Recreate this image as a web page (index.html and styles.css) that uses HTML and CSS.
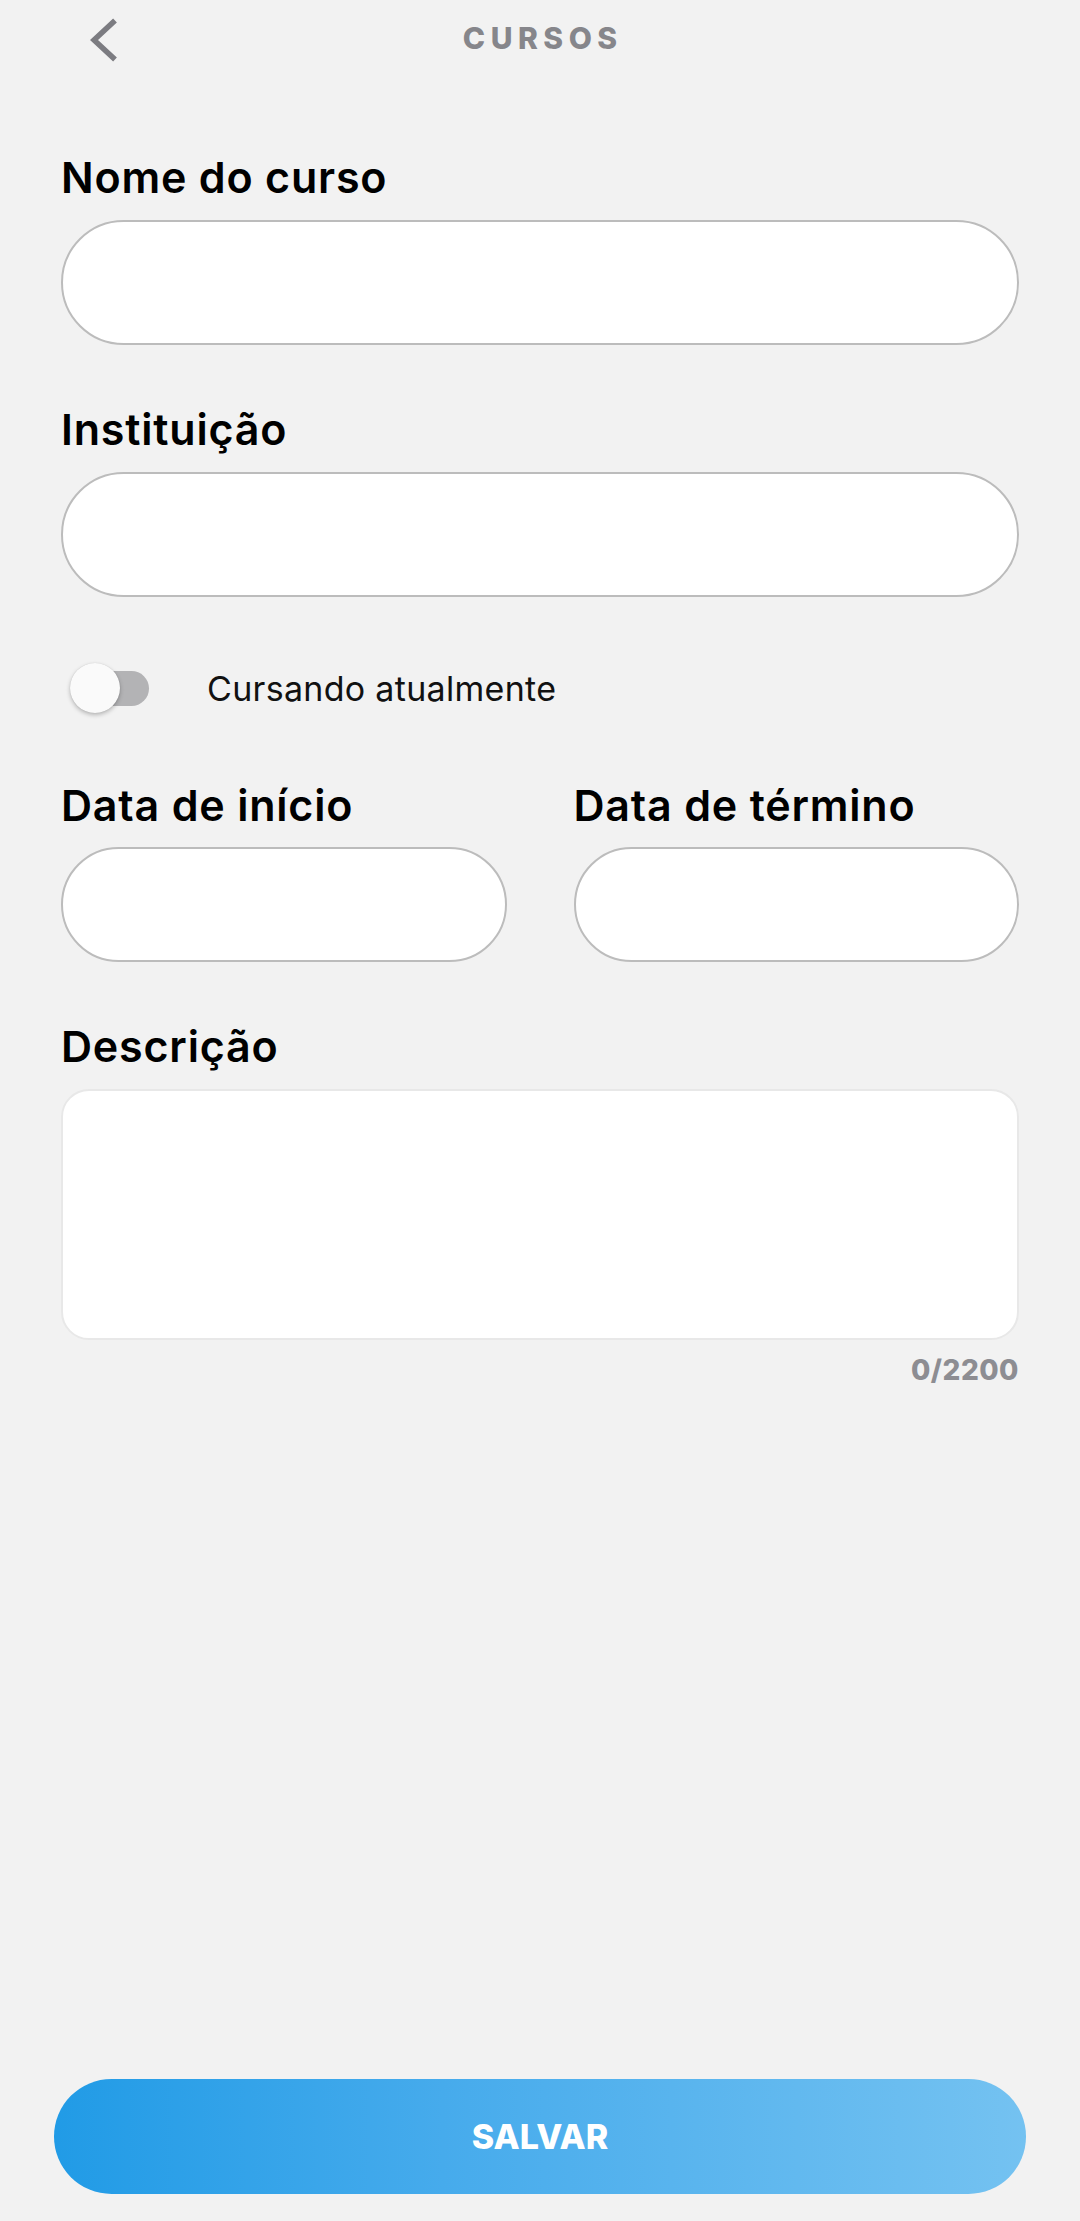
FILE: index.html
```html
<!DOCTYPE html>
<html lang="pt-BR">
<head>
<meta charset="utf-8">
<title>Cursos</title>
<link rel="stylesheet" href="styles.css">
</head>
<body>
<div class="page">
  <header class="topbar">
    <div class="back">
      <svg class="back-icon" width="30" height="44" viewBox="0 0 30 44" aria-hidden="true">
        <polyline points="25,2.5 4,22 25,41.5" fill="none" stroke="#7c7c81" stroke-width="5.5" stroke-linejoin="miter"/>
      </svg>
    </div>
    <h1 class="title">CURSOS</h1>
    <div class="spacer-col"></div>
  </header>

  <main class="form">
    <div class="field field-first">
      <label class="label">Nome do curso</label>
      <div class="input input-lg"></div>
    </div>

    <div class="field field-gap">
      <label class="label">Instituição</label>
      <div class="input input-lg"></div>
    </div>

    <div class="toggle-row">
      <div class="switch">
        <span class="switch-track"></span>
        <span class="switch-knob"></span>
      </div>
      <span class="toggle-text">Cursando atualmente</span>
    </div>

    <div class="date-row">
      <div class="field">
        <label class="label">Data de início</label>
        <div class="input input-md"></div>
      </div>
      <div class="field">
        <label class="label">Data de término</label>
        <div class="input input-md"></div>
      </div>
    </div>

    <div class="field field-gap">
      <label class="label">Descrição</label>
      <div class="textarea"></div>
      <div class="counter">0/2200</div>
    </div>
  </main>

  <div class="fill"></div>

  <footer class="footer">
    <button class="save" type="button">SALVAR</button>
  </footer>
</div>
</body>
</html>
```

FILE: styles.css
```css
* {
  box-sizing: border-box;
}

html, body {
  margin: 0;
  padding: 0;
  background: #f2f2f2;
}

body {
  font-family: Inter, Roboto, "Noto Sans", "Liberation Sans", sans-serif;
  color: #000;
}

.page {
  display: flex;
  flex-direction: column;
  min-height: 2221px;
}

.topbar {
  height: 76px;
  display: grid;
  grid-template-columns: 1fr auto 1fr;
  align-items: center;
}

.back {
  padding-left: 90px;
  display: flex;
  align-items: center;
}

.back-icon {
  display: block;
  margin-top: 3px;
}

.title {
  margin: 0;
  font-size: 30px;
  font-weight: 800;
  letter-spacing: 5.5px;
  margin-right: -5.5px;
  color: #86868b;
  line-height: 40px;
}

.form {
  padding: 0 61px;
}

.field {
  display: flex;
  flex-direction: column;
}

.field-first {
  margin-top: 75px;
}

.field-gap {
  margin-top: 58px;
}

.label {
  font-size: 43px;
  font-weight: 600;
  line-height: 52px;
  letter-spacing: 0.8px;
  margin-bottom: 17px;
  color: #000;
}

.input {
  background: #fff;
  border: 2px solid #bcbcbc;
  border-radius: 70px;
}

.input-lg {
  height: 125px;
}

.input-md {
  height: 115px;
}

.toggle-row {
  margin-top: 61px;
  height: 60px;
  display: flex;
  align-items: center;
}

.switch {
  position: relative;
  width: 79px;
  height: 50px;
  margin-left: 9px;
  flex: none;
}

.switch-track {
  position: absolute;
  left: 8px;
  top: 8px;
  width: 71px;
  height: 35px;
  border-radius: 18px;
  background: #b3b3b5;
}

.switch-knob {
  position: absolute;
  left: 0;
  top: 0;
  width: 50px;
  height: 50px;
  border-radius: 50%;
  background: #fafafa;
  box-shadow: 0 2px 4px rgba(0, 0, 0, 0.25), 0 0 1px rgba(0, 0, 0, 0.15);
}

.toggle-text {
  margin-left: 58px;
  font-size: 34px;
  font-weight: 400;
  letter-spacing: 0.3px;
  color: #111;
}

.date-row {
  margin-top: 61px;
  display: grid;
  grid-template-columns: 1fr 1fr;
  column-gap: 67px;
}

.date-row .label {
  margin-bottom: 16px;
}

.textarea {
  height: 251px;
  background: #fff;
  border: 2px solid #e8e8e8;
  border-radius: 28px;
}

.counter {
  margin-top: 14px;
  text-align: right;
  font-size: 28px;
  font-weight: 800;
  line-height: 32px;
  letter-spacing: 0.5px;
  color: #8d8d92;
}

.fill {
  flex: 1;
}

.footer {
  padding: 0 54px 27px;
}

.save {
  display: block;
  width: 100%;
  height: 115px;
  border: none;
  border-radius: 58px;
  background: linear-gradient(90deg, #219be6 0%, #46abec 40%, #74c2f1 100%);
  color: #fff;
  font-family: Inter, Roboto, "Noto Sans", "Liberation Sans", sans-serif;
  font-size: 34px;
  font-weight: 800;
  padding: 0;
}
```
